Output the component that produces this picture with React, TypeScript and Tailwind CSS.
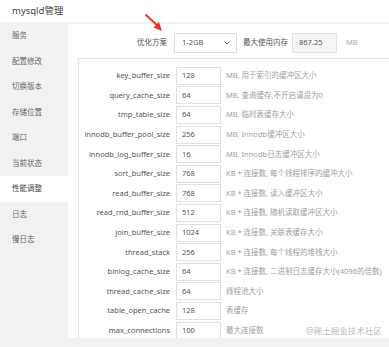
import React from "react";

const rows: [string, string, string][] = [
  ["key_buffer_size", "128", "MB, 用于索引的缓冲区大小"],
  ["query_cache_size", "64", "MB, 查询缓存,不开启请设为0"],
  ["tmp_table_size", "64", "MB, 临时表缓存大小"],
  ["innodb_buffer_pool_size", "256", "MB, Innodb缓冲区大小"],
  ["innodb_log_buffer_size", "16", "MB, Innodb日志缓冲区大小"],
  ["sort_buffer_size", "768", "KB * 连接数, 每个线程排序的缓冲大小"],
  ["read_buffer_size", "768", "KB * 连接数, 读入缓冲区大小"],
  ["read_rnd_buffer_size", "512", "KB * 连接数, 随机读取缓冲区大小"],
  ["join_buffer_size", "1024", "KB * 连接数, 关联表缓存大小"],
  ["thread_stack", "256", "KB * 连接数, 每个线程的堆栈大小"],
  ["binlog_cache_size", "64", "KB * 连接数, 二进制日志缓存大小(4096的倍数)"],
  ["thread_cache_size", "64", "线程池大小"],
  ["table_open_cache", "128", "表缓存"],
  ["max_connections", "100", "最大连接数"],
];

const menu = ["服务", "配置修改", "切换版本", "存储位置", "端口", "当前状态", "性能调整", "日志", "慢日志"];

export default function App() {
  return (
    <div
      className="relative w-[389px] h-[347px] overflow-hidden bg-[#f2f2f2] text-[#555]"
      style={{ fontFamily: '"Noto Sans", "Noto Sans CJK SC", sans-serif' }}
    >
      <div className="h-[22px] bg-white flex items-center pl-[12px] text-[9.5px] text-[#444]">mysqld管理</div>
      <div className="flex">
        <div className="w-[68px] pt-[1px] shrink-0">
          {menu.map((m) => (
            <div
              key={m}
              className={
                "h-[25.5px] flex items-center pl-[12px] text-[7.5px] " +
                (m === "性能调整" ? "bg-white text-[#444]" : "text-[#666]")
              }
            >
              {m}
            </div>
          ))}
        </div>
        <div className="flex-1 bg-white mt-[2px] h-[314px] pl-[10px] pt-[9px] overflow-hidden">
          <div className="flex items-center h-[20px] text-[7.5px]">
            <div className="w-[89px] text-right text-[#555]">优化方案</div>
            <div className="ml-[7px] w-[63px] h-[20px] border border-[#ddd] flex items-center justify-between px-[7px] text-[#555]">
              <span>1-2GB</span>
              <svg width="6" height="4" viewBox="0 0 6 4" className="mr-[-1px]">
                <path d="M0.5 0.5 L3 3 L5.5 0.5" stroke="#555" strokeWidth="0.9" fill="none" />
              </svg>
            </div>
            <div className="ml-[6px] text-[#555]">最大使用内存</div>
            <div className="ml-[4px] w-[45px] h-[20px] border border-[#e2e2e2] bg-[#f5f5f5] flex items-center px-[6px] text-[#555]">
              867.25
            </div>
            <div className="ml-[9px] text-[#aaa]">MB</div>
          </div>
          <div className="mt-[5px] border-t border-l border-[#e4e4e4] pt-[7px] h-[300px]">
            {rows.map(([k, v, d]) => (
              <div key={k} className="flex items-center h-[19.6px] text-[7.5px]">
                <div className="w-[91px] text-right text-[#555] whitespace-nowrap">{k}</div>
                <div className="ml-[6px] w-[45px] h-[18px] border border-[#e0e0e0] flex items-center px-[5px] text-[#555]">
                  {v}
                </div>
                <div className="ml-[5px] text-[#a0a0a0] whitespace-nowrap">{d}</div>
              </div>
            ))}
          </div>
        </div>
      </div>
      <div className="absolute left-[306px] top-[325px] text-[8.5px] text-[#c0c0c0]">@稀土掘金技术社区</div>
      <svg className="absolute left-[140px] top-[10px]" width="26" height="26" viewBox="0 0 26 26">
        <line x1="6" y1="5" x2="18" y2="16" stroke="#e8321e" strokeWidth="1.8" strokeLinecap="round" />
        <polygon points="22,21 13.5,17.5 19,12" fill="#e8321e" />
      </svg>
    </div>
  );
}
